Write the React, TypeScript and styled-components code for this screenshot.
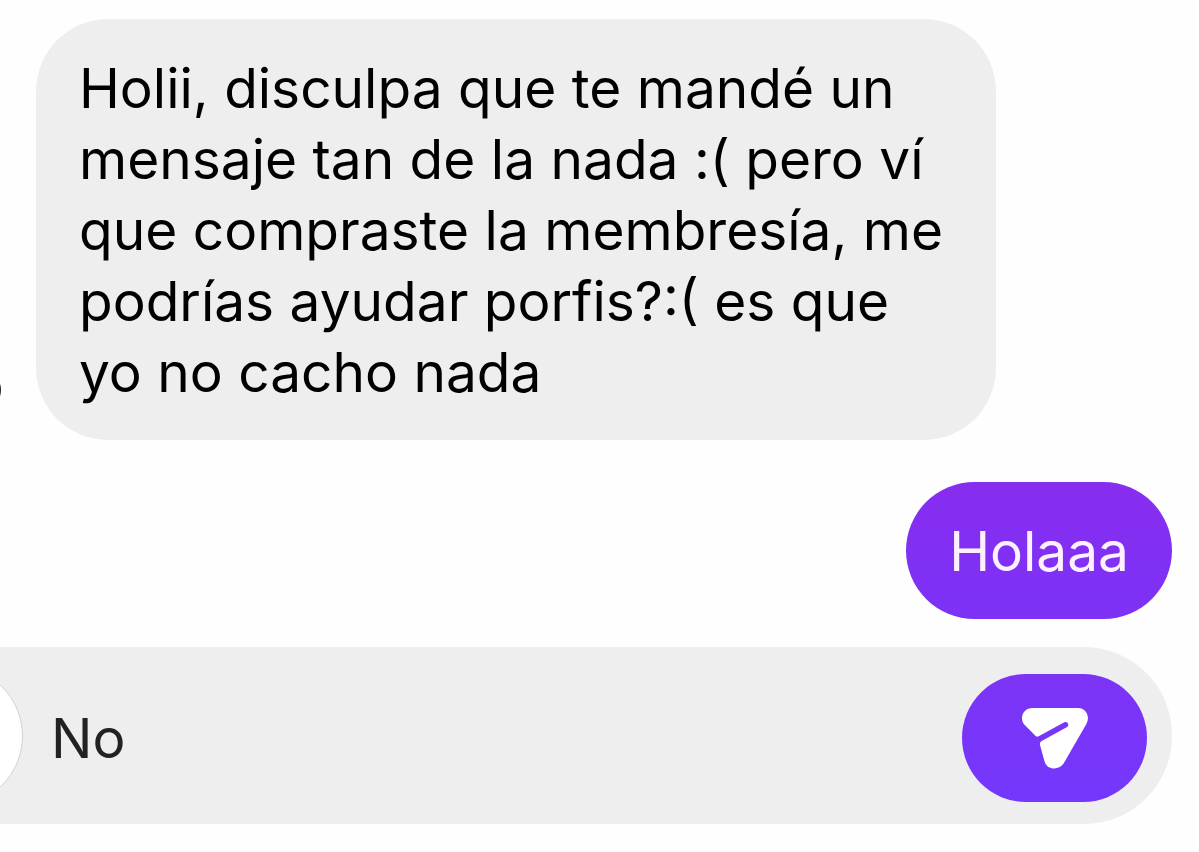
import React, { useState } from 'react';
import styled, { createGlobalStyle } from 'styled-components';

const GlobalStyle = createGlobalStyle`
  *, *::before, *::after { box-sizing: border-box; }
  body {
    margin: 0;
    background: #fefefe;
    font-family: Inter, Roboto, sans-serif;
  }
`;

const Screen = styled.main`
  display: flex;
  flex-direction: column;
  gap: 28px;
  padding: 19px 27px 28px 0;
  overflow: hidden;
`;

const Thread = styled.section`
  display: flex;
  flex-direction: column;
  gap: 42px;
`;

const MessageRow = styled.div<{ $own?: boolean }>`
  display: flex;
  align-items: flex-end;
  justify-content: ${({ $own }) => ($own ? 'flex-end' : 'flex-start')};
`;

const AvatarEdge = styled.svg`
  flex: none;
  width: 36px;
  height: 100px;
`;

const Bubble = styled.p<{ $own?: boolean }>`
  margin: 0;
  max-width: 960px;
  padding: 34px 43px 32px;
  border-radius: 72px;
  font-size: 55px;
  line-height: 71px;
  color: ${({ $own }) => ($own ? '#fdf0ff' : '#000')};
  background: ${({ $own }) => ($own ? 'linear-gradient(#872df0, #7c32f6)' : '#eeeeee')};
`;

const Composer = styled.form`
  display: flex;
  align-items: center;
  height: 177px;
  padding: 5px 25px 0 0;
  border-radius: 0 88px 88px 0;
  background: #eeeeee;
`;

const CameraButton = styled.button`
  flex: none;
  width: 140px;
  height: 140px;
  margin: 0 0 5px -117px;
  padding: 0;
  border: 1px solid #d0d0e0;
  border-radius: 50%;
  background: #fff;
`;

const MessageInput = styled.input`
  flex: 1;
  min-width: 0;
  height: 71px;
  padding: 0 28px;
  border: 0;
  outline: 0;
  background: transparent;
  color: #222;
  font: inherit;
  font-size: 55px;
  line-height: 71px;
`;

const SendButton = styled.button`
  display: flex;
  align-items: center;
  justify-content: center;
  flex: none;
  width: 185px;
  height: 128px;
  padding: 0;
  border: 0;
  border-radius: 64px;
  color: #fff;
  background: linear-gradient(#7d33f6, #7338fc);
`;

const SendIcon = () => (
  <svg width="66" height="61" viewBox="0 0 198 183" fill="currentColor" aria-hidden="true">
    <path d="M31 0H168C191 0 205 25 194 46Q193 49 191 52L127 163C112 190 73 187 67 158L54 111Q52 103 59 99L134 58C144 52 137 38 127 43L50 85Q45 88 41 84L9 52C-11 31 4 0 31 0Z" />
  </svg>
);

export default function App() {
  const [draft, setDraft] = useState('No');

  return (
    <>
      <GlobalStyle />
      <Screen>
        <Thread>
          <MessageRow>
            <AvatarEdge viewBox="0 0 36 100" aria-hidden="true">
              <ellipse cx="-6" cy="50" rx="7" ry="12" fill="#222" />
            </AvatarEdge>
            <Bubble>
              Holii, disculpa que te mandé un mensaje tan de la nada :( pero ví que compraste la
              membresía, me podrías ayudar porfis?:( es que yo no cacho nada
            </Bubble>
          </MessageRow>
          <MessageRow $own>
            <Bubble $own>Holaaa</Bubble>
          </MessageRow>
        </Thread>
        <Composer onSubmit={(event) => event.preventDefault()}>
          <CameraButton type="button" aria-label="Cámara" />
          <MessageInput
            aria-label="Mensaje"
            value={draft}
            onChange={(event) => setDraft(event.target.value)}
          />
          <SendButton type="submit" aria-label="Enviar">
            <SendIcon />
          </SendButton>
        </Composer>
      </Screen>
    </>
  );
}
